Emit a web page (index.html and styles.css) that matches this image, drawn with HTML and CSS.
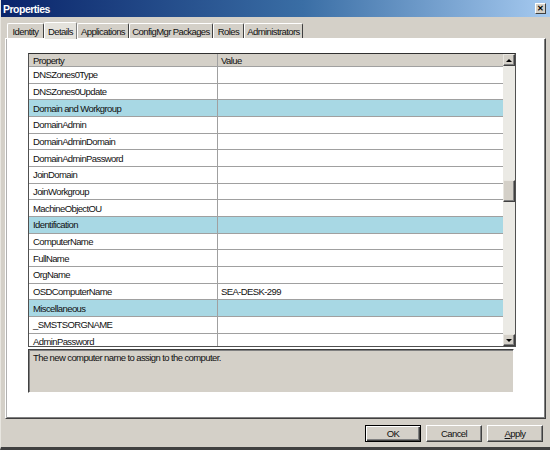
FILE: index.html
```html
<!DOCTYPE html>
<html>
<head>
<meta charset="utf-8">
<title>Properties</title>
<link rel="stylesheet" href="styles.css">
</head>
<body>
<div class="window">
  <div class="titlebar">
    <span class="title">Properties</span>
    <span class="close">✕</span>
  </div>
  <div class="tabs">
    <div class="tab t-identity">Identity</div>
    <div class="tab t-details active">Details</div>
    <div class="tab t-apps">Applications</div>
    <div class="tab t-pkgs">ConfigMgr Packages</div>
    <div class="tab t-roles">Roles</div>
    <div class="tab t-admins">Administrators</div>
  </div>
  <div class="panel">
    <div class="grid">
      <div class="grid-main">
        <div class="grid-head">
          <div class="c1">Property</div>
          <div class="c2">Value</div>
        </div>
        <div class="rows">
          <div class="row"><div class="c1">DNSZones0Type</div><div class="c2"></div></div>
          <div class="row"><div class="c1">DNSZones0Update</div><div class="c2"></div></div>
          <div class="row cat"><div class="c1">Domain and Workgroup</div><div class="c2"></div></div>
          <div class="row"><div class="c1">DomainAdmin</div><div class="c2"></div></div>
          <div class="row"><div class="c1">DomainAdminDomain</div><div class="c2"></div></div>
          <div class="row"><div class="c1">DomainAdminPassword</div><div class="c2"></div></div>
          <div class="row"><div class="c1">JoinDomain</div><div class="c2"></div></div>
          <div class="row"><div class="c1">JoinWorkgroup</div><div class="c2"></div></div>
          <div class="row"><div class="c1">MachineObjectOU</div><div class="c2"></div></div>
          <div class="row cat"><div class="c1">Identification</div><div class="c2"></div></div>
          <div class="row"><div class="c1">ComputerName</div><div class="c2"></div></div>
          <div class="row"><div class="c1">FullName</div><div class="c2"></div></div>
          <div class="row"><div class="c1">OrgName</div><div class="c2"></div></div>
          <div class="row"><div class="c1">OSDComputerName</div><div class="c2">SEA-DESK-299</div></div>
          <div class="row cat"><div class="c1">Miscellaneous</div><div class="c2"></div></div>
          <div class="row"><div class="c1">_SMSTSORGNAME</div><div class="c2"></div></div>
          <div class="row"><div class="c1">AdminPassword</div><div class="c2"></div></div>
        </div>
      </div>
      <div class="scrollbar">
        <div class="sb-btn"><span class="arrow-up"></span></div>
        <div class="sb-track"><div class="sb-thumb"></div></div>
        <div class="sb-btn"><span class="arrow-down"></span></div>
      </div>
    </div>
    <div class="desc">The new computer name to assign to the computer.</div>
  </div>
  <div class="buttons">
    <div class="btn default">OK</div>
    <div class="btn">Cancel</div>
    <div class="btn"><span><u>A</u>pply</span></div>
  </div>
</div>
</body>
</html>
```
FILE: styles.css
```css
* { box-sizing: border-box; }
html, body { margin: 0; padding: 0; }
body {
  width: 550px;
  height: 450px;
  overflow: hidden;
  background: #d4d0c8;
  font-family: "Liberation Sans", Arial, sans-serif;
  font-size: 9.5px;
  letter-spacing: -0.6px;
  color: #111;
}
.window {
  width: 550px;
  height: 450px;
  display: flex;
  flex-direction: column;
  background: #d4d0c8;
  border-bottom: 3px solid #404040;
  border-left: 1px solid #e8e6e0;
}
.titlebar {
  height: 17px;
  flex: none;
  display: flex;
  align-items: center;
  justify-content: space-between;
  padding: 0 4px 0 2px;
  background: linear-gradient(to right, #0a246a, #3a6ea5 55%, #a6caf0);
  color: #fff;
  font-weight: bold;
  font-size: 10.5px;
  letter-spacing: -0.5px;
}
.close {
  width: 11px;
  height: 11px;
  background: #d4d0c8;
  border: 1px solid;
  border-color: #fff #404040 #404040 #fff;
  color: #000;
  font-size: 8px;
  line-height: 9px;
  text-align: center;
  font-weight: bold;
  letter-spacing: 0;
}
.tabs {
  height: 21px;
  flex: none;
  display: flex;
  align-items: flex-end;
  padding-left: 6px;
}
.tab {
  height: 15px;
  display: flex;
  align-items: center;
  justify-content: center;
  border-top: 1px solid #fff;
  border-left: 1px solid #fff;
  border-right: 1px solid #404040;
  border-radius: 2px 2px 0 0;
  white-space: nowrap;
}
.t-identity { width: 37px; }
.t-details { width: 33px; }
.t-apps { width: 52px; }
.t-pkgs { width: 84px; }
.t-roles { width: 31px; }
.t-admins { width: 59px; }
.tab.active {
  height: 17px;
  background: #e4e2dc;
  position: relative;
  z-index: 1;
  margin-bottom: -1px;
  border-right: 1px solid #808080;
}
.panel {
  flex: none;
  height: 381px;
  margin: 0 4px 0 4px;
  background: #fff;
  border: 1px solid;
  border-color: #fff #404040 #404040 #fff;
  box-shadow: inset 1px 0 #b0b0b0, inset -1px -1px #808080;
  padding: 14px 0 0 22px;
}
.grid {
  display: flex;
  width: 488px;
  height: 294px;
  border: 1px solid #505050;
  border-top-color: #303030;
}
.grid-main {
  width: 474px;
  display: flex;
  flex-direction: column;
  overflow: hidden;
}
.grid-head {
  flex: none;
  height: 13px;
  display: flex;
  background: #d4d0c8;
  border-bottom: 1px solid #a0a0a0;
  align-items: center;
}
.c1 {
  width: 189px;
  height: 100%;
  flex: none;
  padding-left: 4px;
  border-right: 1px solid #a0a0a0;
  display: flex;
  align-items: center;
  white-space: nowrap;
}
.c2 {
  flex: 1;
  height: 100%;
  padding-left: 3px;
  display: flex;
  align-items: center;
  white-space: nowrap;
}
.rows {
  flex: 1;
  overflow: hidden;
}
.row {
  height: 16.67px;
  display: flex;
  border-bottom: 1px solid #a0a0a0;
  background: #fff;
}
.row.cat {
  background: #a8d8e4;
}
.scrollbar {
  width: 12px;
  flex: none;
  display: flex;
  flex-direction: column;
  background: #ebeae5;
}
.sb-btn {
  flex: none;
  height: 12px;
  background: #d4d0c8;
  border: 1px solid;
  border-color: #e8e6e0 #404040 #404040 #e8e6e0;
  box-shadow: inset -1px -1px #808080;
  display: flex;
  align-items: center;
  justify-content: center;
}
.arrow-up {
  width: 0;
  height: 0;
  border-left: 3px solid transparent;
  border-right: 3px solid transparent;
  border-bottom: 3px solid #000;
}
.arrow-down {
  width: 0;
  height: 0;
  border-left: 3px solid transparent;
  border-right: 3px solid transparent;
  border-top: 3px solid #000;
}
.sb-track {
  flex: 1;
}
.sb-thumb {
  margin-top: 114px;
  height: 22px;
  background: #d4d0c8;
  border: 1px solid;
  border-color: #e8e6e0 #404040 #404040 #e8e6e0;
  box-shadow: inset -1px -1px #808080;
}
.desc {
  margin-top: 2px;
  width: 486px;
  height: 44px;
  background: #d4d0c8;
  border: 1px solid;
  border-color: #404040 #fff #fff #404040;
  box-shadow: inset 1px 1px #808080;
  padding: 2px 4px;
}
.buttons {
  flex: none;
  margin-top: 6px;
  height: 17px;
  display: flex;
  justify-content: flex-end;
  gap: 5px;
  padding-right: 7px;
}
.btn {
  width: 56px;
  height: 17px;
  background: #d4d0c8;
  border: 1px solid;
  border-color: #fff #404040 #404040 #fff;
  box-shadow: inset -1px -1px #808080;
  display: flex;
  align-items: center;
  justify-content: center;
}
.btn.default {
  border-color: #000;
  box-shadow: inset 1px 1px #fff, inset -1px -1px #404040, inset -2px -2px #808080;
}
```
